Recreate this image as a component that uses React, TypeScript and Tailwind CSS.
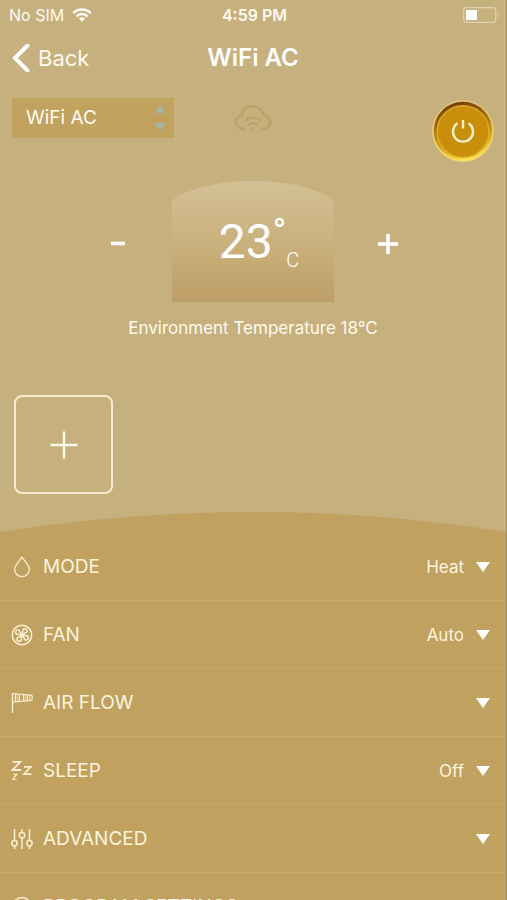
import React from "react";

const setting = "w-[22px] h-[22px] shrink-0 fill-none stroke-[#fbeed2]";

function DropIcon() {
  return (
    <svg viewBox="0 0 22 22" className={setting} strokeWidth="1.3" aria-hidden="true">
      <path d="M11 1.2C8.5 4.8 3.6 9.5 3.6 13.6a7.4 7 0 0 0 14.8 0C18.4 9.5 13.500 4.800 11 1.200Z" />
    </svg>
  );
}

function FanIcon() {
  return (
    <svg viewBox="0 0 22 22" className={setting} strokeWidth="1.500" aria-hidden="true">
      <circle cx="11" cy="11" r="9.700" strokeWidth="1.500" />
      {[20, 110, 200, 290].map((turn) => (
        <g key={turn} transform={`rotate(${turn} 11 11)`}>
          <path d="M11 11L10.500 7.500C9 5.500 10.800 3.600 12.800 4.100C15 4.700 15.200 7 13.300 7.800L11 11" />
        </g>
      ))}
      <circle cx="11" cy="11" r="1.500" className="fill-[#fbeed2]" />
    </svg>
  );
}

function WindsockIcon() {
  return (
    <svg viewBox="0 0 22 22" className={setting} strokeWidth="1.2" aria-hidden="true">
      <path d="M1.500 1v20" strokeWidth="1.400" />
      <path d="M1.500 1.500L20 3.200Q21.200 3.300 21.200 4.400V7.200Q21.200 8.300 20 8.400L1.500 10.200M4.500 2v8M8.500 2.200v7.400M12.500 2.600v6.600M16.500 3v5.800" />
      <path d="M6.500 2v8M14.500 2.800v6.200M18.800 3.200v5.200" strokeWidth="1.800" strokeOpacity="0.5" />
    </svg>
  );
}

function SleepIcon() {
  return (
    <svg viewBox="0 0 22 22" className={setting} aria-hidden="true">
      <path d="M1.500 1.900H9.400L1.500 10H10" strokeWidth="1.800" />
      <path d="M13 6.900H19.800L13 14.100H20.500" strokeWidth="1.700" />
      <path d="M2 14.200H6L1.500 19.200H5.800" strokeWidth="1.100" />
    </svg>
  );
}

function SlidersIcon() {
  return (
    <svg viewBox="0 0 22 22" className={setting} strokeWidth="1.500" aria-hidden="true">
      <path d="M3.500 1v11.500M3.500 18v3M11 1v3.500M11 10v11M18.500 1v11.500M18.500 18v3" />
      <circle cx="3.500" cy="15.200" r="2.700" />
      <circle cx="11" cy="7.200" r="2.700" />
      <circle cx="18.500" cy="15.200" r="2.700" />
    </svg>
  );
}

function ClockIcon() {
  return (
    <svg viewBox="0 0 22 22" className={setting} strokeWidth="1.400" aria-hidden="true">
      <circle cx="11" cy="11" r="9.500" />
      <path d="M11 5v6l4 3" />
    </svg>
  );
}

const rows = [
  { label: "MODE", value: "Heat", icon: <DropIcon /> },
  { label: "FAN", value: "Auto", icon: <FanIcon /> },
  { label: "AIR FLOW", value: "", icon: <WindsockIcon /> },
  { label: "SLEEP", value: "Off", icon: <SleepIcon /> },
  { label: "ADVANCED", value: "", icon: <SlidersIcon /> },
  { label: "PROGRAM SETTINGS", value: "", icon: <ClockIcon /> },
];

function StatusBar() {
  return (
    <div className="grid h-[30px] shrink-0 grid-cols-3 items-center pl-[9px] pr-[6px] text-base">
      <div className="flex items-center gap-2">
        <span>No SIM</span>
        <svg viewBox="0 0 20 14" className="h-[14px] w-5 fill-none stroke-[#fffdf5]" strokeWidth="2.500" aria-hidden="true">
          <path d="M1.200 5.100a12.500 12.500 0 0 1 17.600 0M4.400 8.400a8 8 0 0 1 11.200 0" />
          <path d="M10 13.800L6.900 10.600a4.500 4.500 0 0 1 6.200 0Z" stroke="none" className="fill-[#fffdf5]" />
        </svg>
      </div>
      <span className="whitespace-nowrap text-center font-semibold">4:59 PM</span>
      <svg viewBox="0 0 37 16" className="h-4 w-[37px] justify-self-end" aria-hidden="true">
        <rect x="0.700" y="0.700" width="32" height="14.600" rx="2.500" className="fill-none stroke-[#e0d2ae]" strokeWidth="1.200" />
        <rect x="3" y="3" width="11" height="10" className="fill-white" />
        <path d="M34.500 5.500q2 2.500 0 5z" className="fill-[#e0d2ae]" />
      </svg>
    </div>
  );
}

export default function App() {
  return (
    <div className="flex h-screen flex-col overflow-hidden border-r border-[#a08a5c] bg-[#c6b07d] font-['Inter','Liberation_Sans',sans-serif] text-[#fffaf0]">
      <StatusBar />

      <header className="grid h-14 shrink-0 grid-cols-3 items-center px-3">
        <a href="#back" className="flex items-center gap-2 text-[22px] leading-7">
          <svg viewBox="0 0 18 28" className="h-7 w-[18px] fill-none stroke-white" strokeWidth="4" aria-hidden="true">
            <path d="M15.500 1.500L3 14L15.500 26.500" strokeLinecap="round" strokeLinejoin="miter" />
          </svg>
          Back
        </a>
        <h1 className="whitespace-nowrap text-center text-2xl font-semibold text-white">WiFi AC</h1>
      </header>

      <div className="grid shrink-0 grid-cols-3 items-start px-3 pt-3">
        <div className="grid w-[162px] items-center">
          <select aria-label="Device" className="col-start-1 row-start-1 h-10 w-full appearance-none bg-[#c2a25f] pl-[14px] text-[19px] outline-none" defaultValue="WiFi AC">
            <option>WiFi AC</option>
          </select>
          <svg viewBox="0 0 10 28" className="pointer-events-none col-start-1 row-start-1 mr-[9px] h-7 w-[10px] justify-self-end fill-[#a3b5a8]" aria-hidden="true">
            <path d="M5 1l4.700 8H.300zM5 27l4.700-8H.300z" />
          </svg>
        </div>
        <svg viewBox="0 0 38 28" className="mt-[6px] h-7 w-[38px] justify-self-center fill-none stroke-[#bda368]" strokeWidth="2.800" strokeLinecap="round" aria-hidden="true">
          <path d="M10 25C5 25 1.800 22 1.800 18.200c0-3.600 2.600-6 5.800-6.600C8.400 5.500 13 2 18.500 2c5.300 0 9.600 3.400 11 8.700 4 .500 6.700 3.600 6.700 7.300 0 4-3 7-7.700 7" />
          <path d="M11.500 16.500q7.500-5.500 15 0M15 20.300q4-2.800 8 0" strokeWidth="2.200" />
          <circle cx="19" cy="24.500" r="1.500" className="fill-[#bda368]" stroke="none" />
        </svg>
        <button aria-label="Power" className="mt-[2px] size-[62px] justify-self-end">
          <svg viewBox="0 0 62 62" className="size-[62px]" aria-hidden="true">
            <defs>
              <linearGradient id="rim" x1="0.350" y1="0" x2="0.600" y2="1">
                <stop offset="0" stopColor="#6b3c05" />
                <stop offset="0.350" stopColor="#a3700f" />
                <stop offset="0.700" stopColor="#dba91d" />
                <stop offset="1" stopColor="#ffe853" />
              </linearGradient>
              <linearGradient id="edge" x1="0" y1="0" x2="0" y2="1">
                <stop offset="0" stopColor="#e5c278" />
                <stop offset="1" stopColor="#f7dc65" />
              </linearGradient>
            </defs>
            <circle cx="31" cy="31" r="30" fill="url(#rim)" stroke="url(#edge)" strokeWidth="1.500" />
            <circle cx="31" cy="31.500" r="25.800" fill="#c98f0b" stroke="#dfa827" strokeWidth="1.500" />
            <path d="M25.500 23.300a10 10 0 1 0 11 0M31 20v8.500" fill="none" stroke="#efeecb" strokeWidth="2.400" />
          </svg>
        </button>
      </div>

      <section className="flex shrink-0 flex-col items-center pt-[19px]">
        <div className="flex w-full items-center justify-center gap-[38px]">
          <button aria-label="Decrease temperature" className="flex h-12 w-8 items-center justify-center">
            <svg viewBox="0 0 32 32" className="size-8 stroke-white" strokeWidth="3.600" aria-hidden="true"><path d="M9 17.500h14" /></svg>
          </button>
          <div className="relative h-[121px] w-[162px]">
            <svg viewBox="0 0 162 121" preserveAspectRatio="none" className="absolute inset-0 size-full" aria-hidden="true">
              <defs>
                <linearGradient id="dome" x1="0" y1="0" x2="0" y2="1">
                  <stop offset="0" stopColor="#d4c096" />
                  <stop offset="0.500" stopColor="#cab17d" />
                  <stop offset="1" stopColor="#be9f66" />
                </linearGradient>
              </defs>
              <path d="M0 121V24Q0 18 6 15Q37 0 81 0T156 15Q162 18 162 24V121Z" fill="url(#dome)" />
            </svg>
            <div className="relative flex h-full items-center justify-center pl-3 font-['Roboto',sans-serif] text-white">
              <span className="text-5xl leading-[56px]">23</span>
              <span className="h-14 text-4xl leading-9">°</span>
              <span className="flex h-14 items-end text-xl font-light leading-5">C</span>
            </div>
          </div>
          <button aria-label="Increase temperature" className="flex h-12 w-8 items-center justify-center">
            <svg viewBox="0 0 32 32" className="size-8 stroke-white" strokeWidth="3.600" aria-hidden="true"><path d="M6 18h20M16 8v20" /></svg>
          </button>
        </div>
        <p className="pt-[14px] text-[17px] leading-6">Environment Temperature 18°C</p>
      </section>

      <div className="shrink-0 px-[14px] pb-[18px] pt-[55px]">
        <button aria-label="Add" className="flex size-[99px] items-center justify-center rounded-lg border-2 border-[#f6ebd0]">
          <svg viewBox="0 0 28 28" className="size-7 stroke-[#fffaf0]" strokeWidth="2.400" aria-hidden="true"><path d="M.500 14h27M14 .500v27" /></svg>
        </button>
      </div>

      <svg viewBox="0 0 507 20" preserveAspectRatio="none" className="h-5 w-full shrink-0 fill-[#c0a15f]" aria-hidden="true">
        <path d="M0 20Q258-20 507 20Z" />
      </svg>
      <ul className="shrink-0 bg-[#c0a15f] pt-px text-[#fdf4de]">
        {rows.map((row) => (
          <li key={row.label} className="border-b border-[#c6a96c]">
            <button className="flex h-[67px] w-full items-center pl-[11px] pr-4 text-left">
              {row.icon}
              <span className="grow pl-[10px] text-[19px] leading-7">{row.label}</span>
              <span className="pr-3 text-[17px] leading-6">{row.value}</span>
              <svg viewBox="0 0 14 10" className="h-[10px] w-[14px] fill-white" aria-hidden="true"><path d="M0 0h14L7 10z" /></svg>
            </button>
          </li>
        ))}
      </ul>
    </div>
  );
}
